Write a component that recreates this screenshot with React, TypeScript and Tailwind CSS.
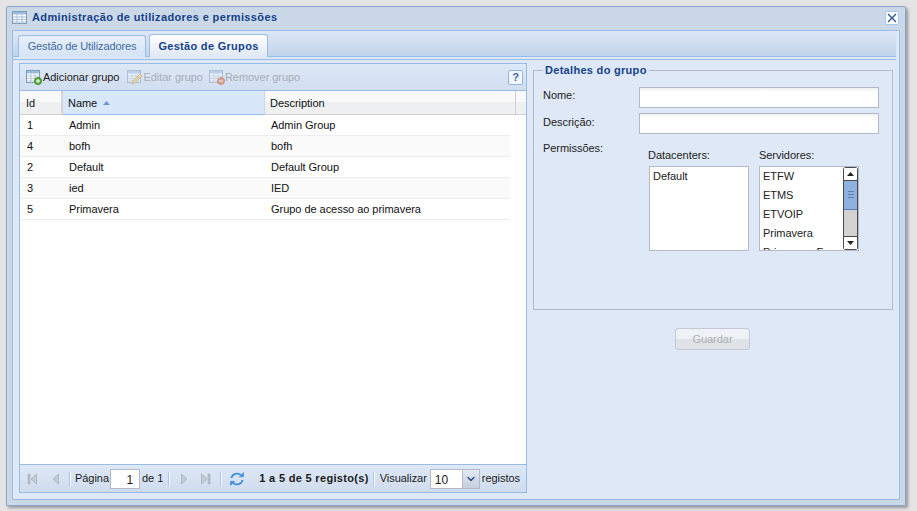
import { ChevronDown } from "lucide-react";

const rows = [
  { id: "1", name: "Admin", description: "Admin Group" },
  { id: "4", name: "bofh", description: "bofh" },
  { id: "2", name: "Default", description: "Default Group" },
  { id: "3", name: "ied", description: "IED" },
  { id: "5", name: "Primavera", description: "Grupo de acesso ao primavera" },
];

const servers = ["ETFW", "ETMS", "ETVOIP", "Primavera", "Primavera-F"];

function TableIcon({ muted, badge }: { muted?: boolean; badge?: "add" | "edit" | "remove" }) {
  return (
    <svg width="16" height="16" viewBox="0 0 16 16" className={`shrink-0 ${muted ? "opacity-50" : ""}`}>
      <rect x="0.5" y="1.5" width="13" height="12" fill="#fff" stroke="#7f9db9" />
      <rect x="1" y="2" width="12" height="2.5" fill="#9cbbe0" />
      <path d="M1 7h12M1 9.5h12M1 12h12M5 4.5v9M9 4.5v9" stroke="#b4c8e0" />
      {badge === "add" && (
        <>
          <circle cx="12" cy="12" r="3.5" fill="#5fae3a" stroke="#3d8a25" />
          <path d="M10 12h4M12 10v4" stroke="#fff" />
        </>
      )}
      {badge === "remove" && (
        <>
          <circle cx="12" cy="12" r="3.5" fill="#e2632a" stroke="#b8491a" />
          <path d="M10 12h4" stroke="#fff" />
        </>
      )}
      {badge === "edit" && <path d="M5 15l1-3 7-7 2 2-7 7z" fill="#f0c24a" stroke="#b8862a" strokeWidth="0.7" />}
    </svg>
  );
}

function PagerArrow({ dir, bar }: { dir: "left" | "right"; bar?: boolean }) {
  const left = dir === "left";
  return (
    <svg width="12" height="12" viewBox="0 0 12 12" className="shrink-0">
      {bar && <rect x={left ? 1 : 9} y="1" width="2" height="10" fill="#b9c2cd" stroke="#9aa4b0" strokeWidth="0.5" />}
      <path
        d={left ? "M9.5 1v10L4 6z" : "M2.5 1v10L8 6z"}
        fill="#c4ccd6"
        stroke="#a2abb6"
        strokeWidth="0.7"
      />
    </svg>
  );
}

function Sep() {
  return <div className="w-px h-[14px] bg-[#aac5ea] border-r border-white box-content shrink-0" />;
}

function GridPanel() {
  return (
    <div className="w-[508px] h-[430px] border border-[#99bbe8] flex flex-col shrink-0">
      <div className="h-[27px] flex items-center pl-[6px] pr-[3px] border-b border-[#99bbe8] bg-gradient-to-b from-[#dee8f6] to-[#d0def0]">
        <div className="flex items-center">
          <TableIcon badge="add" />
          <span className="ml-px text-[#1b1b1b]">Adicionar grupo</span>
        </div>
        <div className="flex items-center ml-[8px] text-[#a6adb7]">
          <TableIcon muted badge="edit" />
          <span>Editar grupo</span>
        </div>
        <div className="flex items-center ml-[6px] text-[#a6adb7]">
          <TableIcon muted badge="remove" />
          <span>Remover grupo</span>
        </div>
        <div className="ml-auto w-[15px] h-[15px] rounded-[2px] border border-[#8fb4e6] bg-[#f4f8fd] flex items-center justify-center text-[11px] font-bold text-[#3e6aa8]">
          ?
        </div>
      </div>
      <div className="h-[24px] flex border-b border-[#d0d0d0] bg-gradient-to-b from-[#f9f9f9] from-50% to-[#eef0f2] to-50% text-[#111]">
        <div className="w-[43px] pl-[6px] pt-px flex items-center border-r-2 border-[#d4d4d4]">Id</div>
        <div className="w-[202px] pl-[5px] pt-px flex items-center bg-[#d8e7fa] border-b border-[#99bbe8] border-r border-r-[#c5d8f0] -mb-px">
          Name
          <svg width="7" height="4" viewBox="0 0 7 4" className="ml-[6px]">
            <path d="M0 4L3.5 0L7 4z" fill="#6e97cf" />
          </svg>
        </div>
        <div className="w-[251px] pl-[5px] pt-px flex items-center border-r border-[#d0d0d0]">Description</div>
      </div>
      <div className="flex-1 bg-white">
        {rows.map((row, i) => (
          <div
            key={row.id}
            className={`w-[490px] h-[21px] flex items-center border-b border-[#ededed] text-[#111] ${i % 2 ? "bg-[#fafafa]" : "bg-white"}`}
          >
            <div className="w-[49px] pl-[7px]">{row.id}</div>
            <div className="w-[202px]">{row.name}</div>
            <div>{row.description}</div>
          </div>
        ))}
      </div>
      <div className="h-[28px] border-t border-[#99bbe8] bg-gradient-to-b from-[#dee8f6] to-[#cfdcee] flex items-center pl-[7px] text-[#1b1b1b] whitespace-nowrap">
        <PagerArrow dir="left" bar />
        <div className="ml-[10px]">
          <PagerArrow dir="left" />
        </div>
        <div className="ml-[8px]">
          <Sep />
        </div>
        <span className="ml-[4px]">Página</span>
        <div className="ml-px w-[30px] h-[20px] shrink-0 border border-[#b5b8c8] bg-white text-right pr-[6px] leading-[20px] text-[12px]">
          1
        </div>
        <span className="ml-[2px]">de 1</span>
        <div className="ml-[5px]">
          <Sep />
        </div>
        <div className="ml-[9px]">
          <PagerArrow dir="right" />
        </div>
        <div className="ml-[8px]">
          <PagerArrow dir="right" bar />
        </div>
        <div className="ml-[9px]">
          <Sep />
        </div>
        <svg width="16" height="16" viewBox="0 0 16 16" className="ml-[7px] shrink-0" fill="none" stroke="#3f8fdc" strokeWidth="1.8">
          <path d="M2.5 7A5.5 5 0 0 1 12 4.2" />
          <path d="M13.5 9A5.5 5 0 0 1 4 11.8" />
          <path d="M14.5 1.5v4.2h-4.2z" fill="#3f8fdc" strokeWidth="0.6" />
          <path d="M1.5 14.5v-4.2h4.2z" fill="#3f8fdc" strokeWidth="0.6" />
        </svg>
        <span className="ml-[14px] font-bold tracking-[0.32px]">1 a 5 de 5 registo(s)</span>
        <div className="ml-[4px]">
          <Sep />
        </div>
        <span className="ml-[5px]">Visualizar</span>
        <div className="ml-[3px] w-[50px] h-[20px] shrink-0 flex border border-[#b5b8c8] bg-white">
          <span className="flex-1 pl-[4px] leading-[20px] text-[12px]">10</span>
          <div className="w-[17px] flex items-center justify-center bg-gradient-to-b from-[#e3e9f3] to-[#c5cfdd] border-l border-[#b5b8c8]">
            <ChevronDown size={12} strokeWidth={3} className="text-[#2f4f8f]" />
          </div>
        </div>
        <span className="ml-[2px]">registos</span>
      </div>
    </div>
  );
}

function ScrollBar() {
  return (
    <div className="w-[15px] h-full flex flex-col border-x border-[#4a4a4a] rounded-[3px] overflow-hidden bg-[#d4d2d0]">
      <div className="h-[14px] bg-white border-y border-[#4a4a4a] flex items-center justify-center">
        <svg width="7" height="4" viewBox="0 0 7 4">
          <path d="M0 4L3.5 0L7 4z" fill="#222" />
        </svg>
      </div>
      <div className="h-[29px] bg-[#8fb1e0] border-b border-[#5a7fb5] flex items-center justify-center">
        <div className="w-[6px] h-[7px] border-y border-[#5f7da8] flex items-center">
          <div className="w-full h-px bg-[#5f7da8]" />
        </div>
      </div>
      <div className="flex-1" />
      <div className="h-[14px] bg-white border-y border-[#4a4a4a] flex items-center justify-center">
        <svg width="7" height="4" viewBox="0 0 7 4">
          <path d="M0 0L3.5 4L7 0z" fill="#222" />
        </svg>
      </div>
    </div>
  );
}

function DetailsPanel() {
  return (
    <div className="ml-[6px] flex flex-col">
      <fieldset className="w-[360px] h-[248px] border border-[#b5b8c8] px-[9px] pt-[8px] m-0 -mt-px">
        <legend className="px-[2px] font-bold text-[#15428b] tracking-[0.3px]">Detalhes do grupo</legend>
        <div className="flex items-center h-[21px]">
          <span className="w-[96px] pb-[3px]">Nome:</span>
          <div className="w-[240px] h-[21px] border border-[#b5b8c8] bg-gradient-to-b from-[#f0f0f0] to-white to-20%" />
        </div>
        <div className="flex items-center h-[21px] mt-[5px]">
          <span className="w-[96px] pb-[2px]">Descrição:</span>
          <div className="w-[240px] h-[21px] border border-[#b5b8c8] bg-gradient-to-b from-[#f0f0f0] to-white to-20%" />
        </div>
        <div className="flex mt-[7px]">
          <span className="w-[105px] leading-[14px]">Permissões:</span>
          <div className="w-[111px] pt-[7px]">
            <div className="h-[14px] leading-[14px]">Datacenters:</div>
            <div className="ml-px mt-[4px] w-[100px] h-[85px] border border-[#b5b8c8] bg-white pl-[3px] pt-[2px] leading-[15px]">
              Default
            </div>
          </div>
          <div className="pt-[7px]">
            <div className="h-[14px] leading-[14px]">Servidores:</div>
            <div className="mt-[4px] w-[100px] h-[85px] border border-[#b5b8c8] bg-white flex overflow-hidden">
              <div className="w-[83px] pl-[3px] h-full overflow-hidden">
                {servers.map((server) => (
                  <div key={server} className="h-[19px] leading-[19px] whitespace-nowrap">
                    {server}
                  </div>
                ))}
              </div>
              <ScrollBar />
            </div>
          </div>
        </div>
      </fieldset>
      <div className="ml-[142px] mt-[18px] w-[75px] h-[22px] rounded-[3px] border border-[#c3cad6] bg-gradient-to-b from-[#eef1f6] from-50% to-[#dfe3e8] to-50% flex items-center justify-center text-[#a9aeb6]">
        Guardar
      </div>
    </div>
  );
}

export default function App() {
  return (
    <div className="w-[917px] h-[511px] bg-[#e4e4e4] pt-[6px] pl-[6px] text-[11px] tracking-[-0.04px] text-[#222] font-['Liberation_Sans',sans-serif]">
      <div className="w-[900px] h-[500px] border border-[#8ba5cf] rounded-t-[2px] bg-[#cbd8e8] shadow-[2px_2px_3px_#999] flex flex-col">
        <div className="h-[23px] flex items-center pl-[5px] pr-[6px] pb-[2px] shrink-0">
          <svg width="16" height="14" viewBox="0 0 16 14">
            <rect x="0.5" y="0.5" width="14" height="12" fill="#fff" stroke="#7f9db9" />
            <rect x="1" y="1" width="13" height="2.5" fill="#9cbbe0" />
            <path d="M1 6h13M1 8.5h13M1 11h13M5 3.5v9M10 3.5v9" stroke="#a9bfdc" />
          </svg>
          <span className="ml-[4px] font-bold text-[#15428b] tracking-[0.37px]">Administração de utilizadores e permissões</span>
          <div className="ml-auto w-[14px] h-[14px] rounded-[2px] border border-[#a9c4ea] bg-white flex items-center justify-center">
            <svg width="10" height="10" viewBox="0 0 10 10">
              <path d="M1 1l8 8M9 1l-8 8" stroke="#2f5597" strokeWidth="1.4" />
            </svg>
          </div>
        </div>
        <div className="ml-[5px] w-[888px] h-[470px] border border-[#99bbe8] bg-[#dfe8f6] flex flex-col">
          <div className="h-[26px] pl-[5px] pr-[3px] shrink-0 flex items-end gap-[3px] bg-gradient-to-b from-[#dee8f6] to-[#c2d4eb] border-b border-[#99bbe8] mr-[3px]">
            <div className="w-[128px] h-[22px] -mb-px border border-[#9cbde6] border-b-0 rounded-t-[3px] bg-gradient-to-b from-[#e8f0fb] to-[#d5e3f5] flex items-center justify-center text-[#416aa3] tracking-[-0.12px]">
              Gestão de Utilizadores
            </div>
            <div className="w-[119px] h-[23px] -mb-px border border-[#9cbde6] border-b-0 rounded-t-[3px] bg-gradient-to-b from-white to-[#dfe8f6] flex items-center justify-center font-bold text-[#15428b] tracking-[0.3px]">
              Gestão de Grupos
            </div>
          </div>
          <div className="h-[3px] border-b border-[#99bbe8] mr-[3px] shrink-0" />
          <div className="flex pl-[6px] pt-[3px]">
            <GridPanel />
            <DetailsPanel />
          </div>
        </div>
      </div>
    </div>
  );
}
